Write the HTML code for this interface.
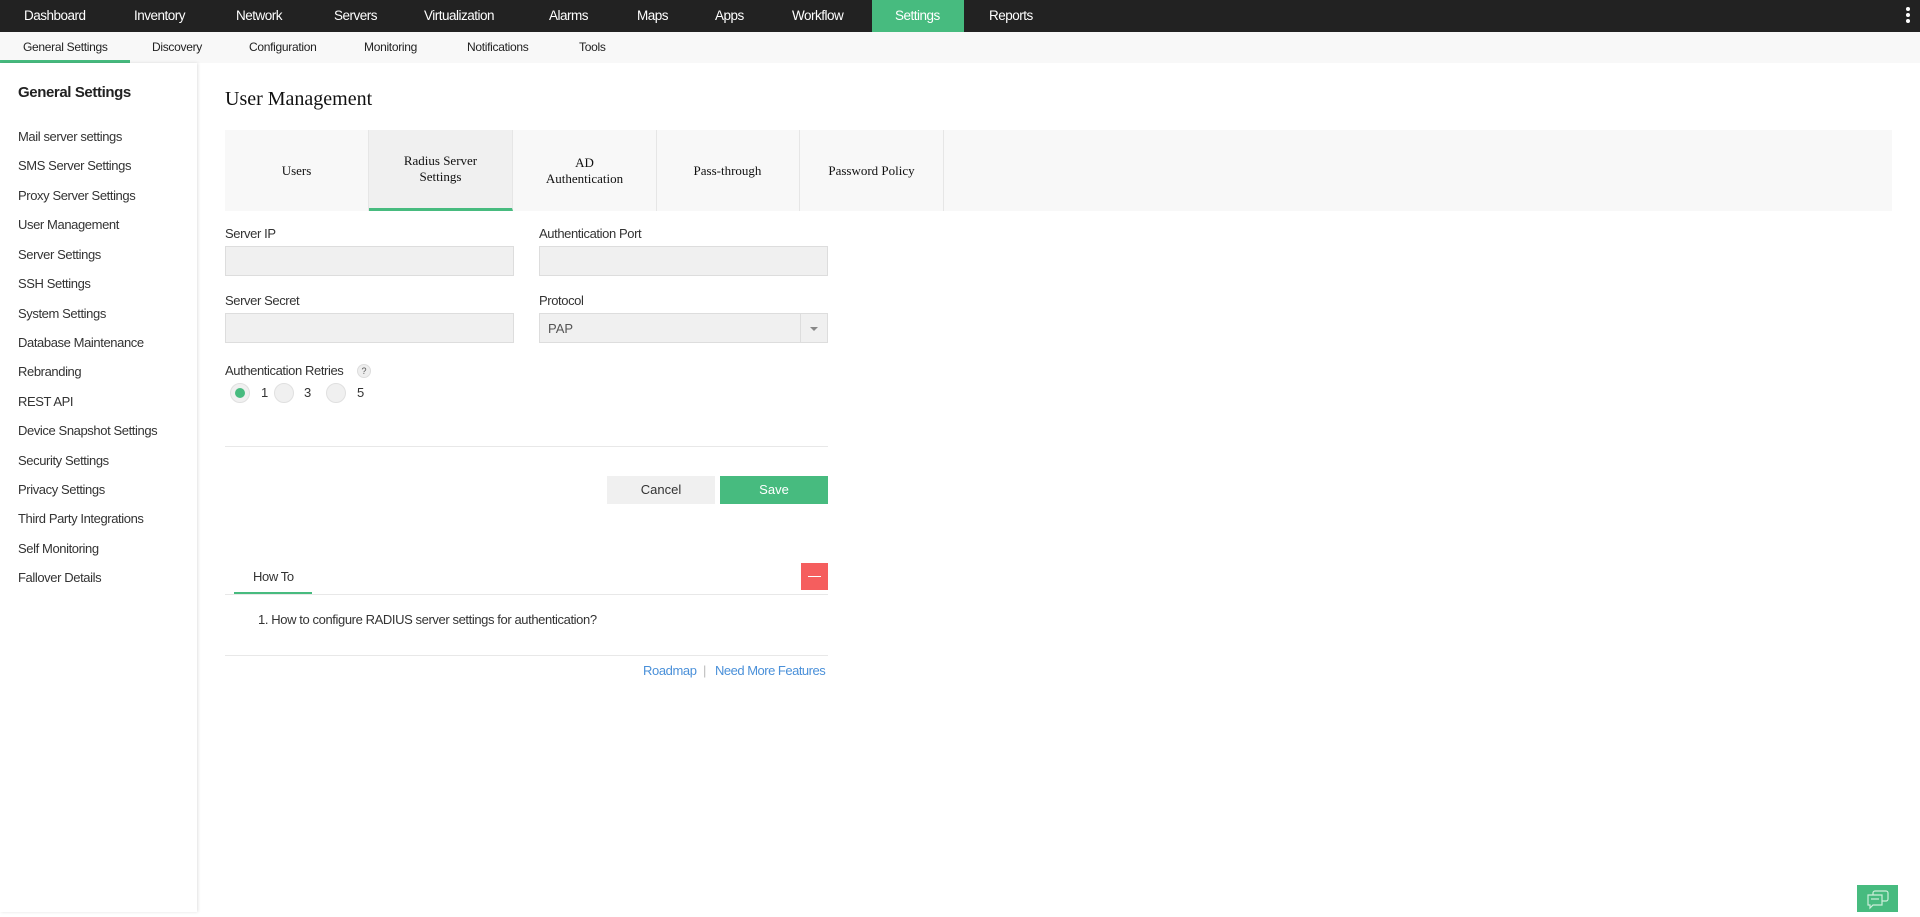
<!DOCTYPE html>
<html><head><meta charset="utf-8"><style>
*{box-sizing:border-box;margin:0;padding:0}
body{width:1920px;height:912px;overflow:hidden;background:#fff;font-family:"Liberation Sans",sans-serif;color:#333;position:relative}
.a{position:absolute;white-space:nowrap}
.top{position:absolute;left:0;top:0;width:1920px;height:32px;background:#222}
.top .a{color:#fff;font-size:13.5px;top:8px;letter-spacing:-0.5px}
.sub{position:absolute;left:0;top:32px;width:1920px;height:31px;background:#f8f8f8}
.sub .a{font-size:12px;top:8px;color:#222;letter-spacing:-0.3px}
.side{position:absolute;left:0;top:63px;width:197px;height:849px;background:#fff;box-shadow:1px 0 3px rgba(0,0,0,.12)}
.side .i{position:absolute;left:18px;font-size:13px;color:#333;letter-spacing:-0.4px;white-space:nowrap}
.tab{position:absolute;top:130px;height:81px;width:144px;border-right:1px solid #e6e6e6;font-family:"Liberation Serif",serif;font-size:13px;color:#111;display:flex;align-items:center;justify-content:center;text-align:center;line-height:16px}
.lbl{font-size:13px;color:#333;letter-spacing:-0.4px}
.inp{position:absolute;height:30px;background:#f0f0f0;border:1px solid #ddd}
.rad{position:absolute;width:20px;height:20px;border-radius:50%;background:#f0f0f0;border:1px solid #e0e0e0}
</style></head><body>
<div class="top">
<span class="a" style="left:24px">Dashboard</span>
<span class="a" style="left:134px">Inventory</span>
<span class="a" style="left:236px">Network</span>
<span class="a" style="left:334px">Servers</span>
<span class="a" style="left:424px">Virtualization</span>
<span class="a" style="left:549px">Alarms</span>
<span class="a" style="left:637px">Maps</span>
<span class="a" style="left:715px">Apps</span>
<span class="a" style="left:792px">Workflow</span>
<div style="position:absolute;left:872px;top:0;width:92px;height:32px;background:#47bb7f"></div>
<span class="a" style="left:895px">Settings</span>
<span class="a" style="left:989px">Reports</span>
<div style="position:absolute;left:1906px;top:7px;width:4px;height:4px;border-radius:50%;background:#fff"></div>
<div style="position:absolute;left:1906px;top:13px;width:4px;height:4px;border-radius:50%;background:#fff"></div>
<div style="position:absolute;left:1906px;top:19px;width:4px;height:4px;border-radius:50%;background:#fff"></div>
</div>
<div class="sub">
<span class="a" style="left:23px">General Settings</span>
<span class="a" style="left:152px">Discovery</span>
<span class="a" style="left:249px">Configuration</span>
<span class="a" style="left:364px">Monitoring</span>
<span class="a" style="left:467px">Notifications</span>
<span class="a" style="left:579px">Tools</span>
<div style="position:absolute;left:0;top:28px;width:130px;height:3px;background:#47bb7f"></div>
</div>
<div class="side">
<div class="i" style="top:21px;font-size:15px;font-weight:bold;color:#222">General Settings</div>
<div class="i" style="top:66px">Mail server settings</div>
<div class="i" style="top:95px">SMS Server Settings</div>
<div class="i" style="top:125px">Proxy Server Settings</div>
<div class="i" style="top:154px">User Management</div>
<div class="i" style="top:184px">Server Settings</div>
<div class="i" style="top:213px">SSH Settings</div>
<div class="i" style="top:243px">System Settings</div>
<div class="i" style="top:272px">Database Maintenance</div>
<div class="i" style="top:301px">Rebranding</div>
<div class="i" style="top:331px">REST API</div>
<div class="i" style="top:360px">Device Snapshot Settings</div>
<div class="i" style="top:390px">Security Settings</div>
<div class="i" style="top:419px">Privacy Settings</div>
<div class="i" style="top:448px">Third Party Integrations</div>
<div class="i" style="top:478px">Self Monitoring</div>
<div class="i" style="top:507px">Fallover Details</div>
</div>
<div class="a" style="left:225px;top:88px;font-family:'Liberation Serif',serif;font-size:20px;color:#111">User Management</div>
<div style="position:absolute;left:225px;top:130px;width:1667px;height:81px;background:#f8f8f8"></div>
<div class="tab" style="left:225px">Users</div>
<div class="tab" style="left:369px;background:#f0f0f0;border-bottom:3px solid #47bb7f">Radius Server<br>Settings</div>
<div class="tab" style="left:513px">AD<br>Authentication</div>
<div class="tab" style="left:656px">Pass-through</div>
<div class="tab" style="left:800px">Password Policy</div>
<div class="a lbl" style="left:225px;top:226px">Server IP</div>
<div class="a lbl" style="left:539px;top:226px">Authentication Port</div>
<div class="inp" style="left:225px;top:246px;width:289px"></div>
<div class="inp" style="left:539px;top:246px;width:289px"></div>
<div class="a lbl" style="left:225px;top:293px">Server Secret</div>
<div class="a lbl" style="left:539px;top:293px">Protocol</div>
<div class="inp" style="left:225px;top:313px;width:289px"></div>
<div class="inp" style="left:539px;top:313px;width:289px"><span class="a" style="left:8px;top:7px;font-size:13px;color:#555">PAP</span><div style="position:absolute;left:260px;top:0;width:1px;height:28px;background:#ddd"></div><div style="position:absolute;left:270px;top:13px;border-left:4px solid transparent;border-right:4px solid transparent;border-top:4px solid #888"></div></div>
<div class="a lbl" style="left:225px;top:363px">Authentication Retries</div>
<div style="position:absolute;left:357px;top:364px;width:14px;height:14px;border-radius:50%;background:#eee;border:1px solid #ddd;font-size:9px;text-align:center;line-height:12px;color:#555">?</div>
<div class="rad" style="left:230px;top:383px"><div style="position:absolute;left:4px;top:4px;width:10px;height:10px;border-radius:50%;background:#47bb7f"></div></div>
<div class="a lbl" style="left:261px;top:385px">1</div>
<div class="rad" style="left:274px;top:383px"></div>
<div class="a lbl" style="left:304px;top:385px">3</div>
<div class="rad" style="left:326px;top:383px"></div>
<div class="a lbl" style="left:357px;top:385px">5</div>
<div style="position:absolute;left:225px;top:446px;width:603px;height:1px;background:#e8e8e8"></div>
<div style="position:absolute;left:607px;top:476px;width:108px;height:28px;background:#f0f0f0;font-size:13px;text-align:center;line-height:28px;color:#333">Cancel</div>
<div style="position:absolute;left:720px;top:476px;width:108px;height:28px;background:#47bb7f;font-size:13px;text-align:center;line-height:28px;color:#fff">Save</div>
<div class="a lbl" style="left:253px;top:569px">How To</div>
<div style="position:absolute;left:225px;top:594px;width:603px;height:1px;background:#e8e8e8"></div>
<div style="position:absolute;left:234px;top:592px;width:78px;height:2px;background:#47bb7f"></div>
<div style="position:absolute;left:801px;top:563px;width:27px;height:27px;background:#f55e5e"><div style="position:absolute;left:7px;top:13px;width:13px;height:1px;background:#fff"></div></div>
<div class="a" style="left:258px;top:612px;font-size:13px;color:#333;letter-spacing:-0.4px">1. How to configure RADIUS server settings for authentication?</div>
<div style="position:absolute;left:225px;top:655px;width:603px;height:1px;background:#e8e8e8"></div>
<div class="a" style="left:643px;top:663px;font-size:13px;color:#4a90d9;letter-spacing:-0.4px">Roadmap</div>
<div class="a" style="left:703px;top:663px;font-size:13px;color:#bbb">|</div>
<div class="a" style="left:715px;top:663px;font-size:13px;color:#4a90d9;letter-spacing:-0.5px">Need More Features</div>
<div style="position:absolute;left:1857px;top:885px;width:41px;height:27px;background:#47bb7f">
<svg width="41" height="27" viewBox="0 0 41 27"><g fill="none" stroke="#cdeedb" stroke-width="1.2"><rect x="16" y="6" width="15" height="10" rx="2"/><path d="M11 10h14v10h-9l-3 3v-3h-2z" fill="#47bb7f"/><path d="M14 14h8"/></g></svg>
</div>
</body></html>
